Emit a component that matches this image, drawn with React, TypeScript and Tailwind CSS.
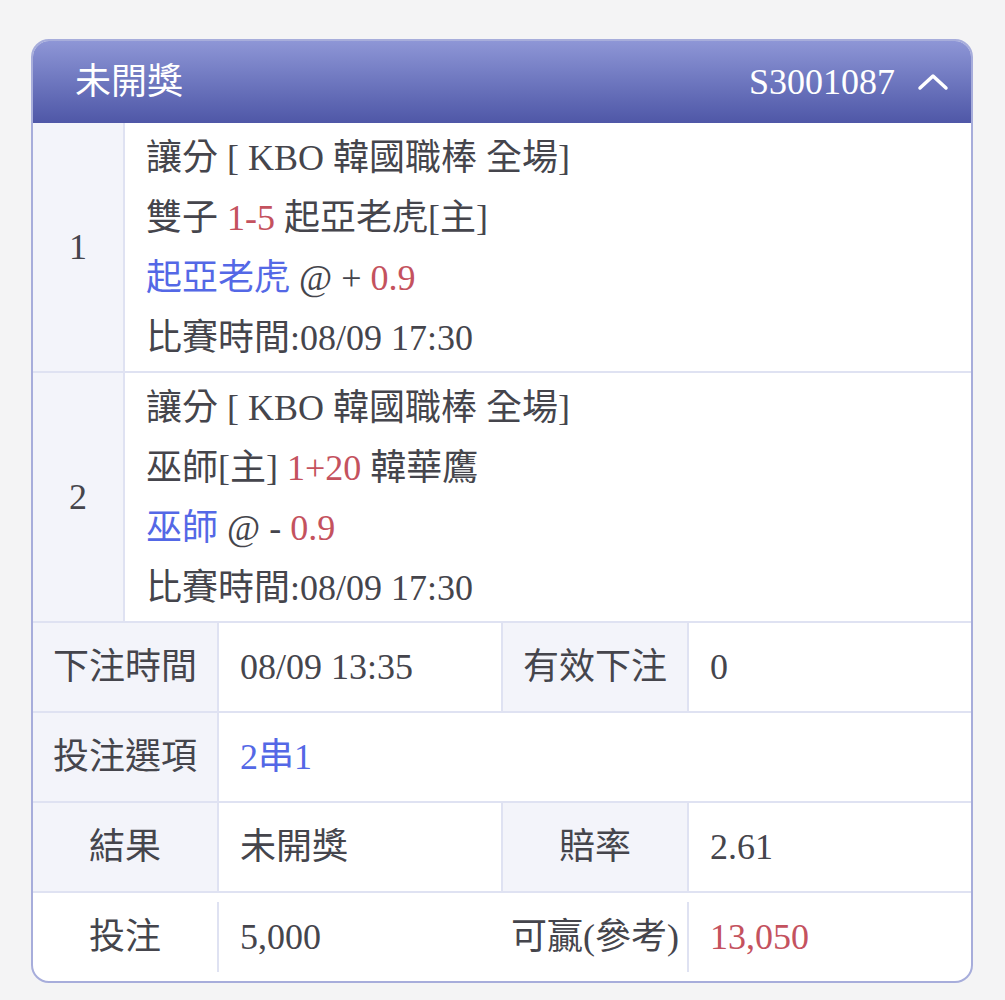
const font = "font-['Liberation_Serif','Noto_Sans_CJK_TC',serif]";

interface Leg {
  no: number;
  market: string;
  home: string;
  score: string;
  away: string;
  pick: string;
  sign: string;
  odds: string;
  time: string;
}

const legs: Leg[] = [
  {
    no: 1,
    market: "讓分 [ KBO 韓國職棒 全場]",
    home: "雙子",
    score: "1-5",
    away: "起亞老虎[主]",
    pick: "起亞老虎",
    sign: "+",
    odds: "0.9",
    time: "08/09 17:30",
  },
  {
    no: 2,
    market: "讓分 [ KBO 韓國職棒 全場]",
    home: "巫師[主]",
    score: "1+20",
    away: "韓華鷹",
    pick: "巫師",
    sign: "-",
    odds: "0.9",
    time: "08/09 17:30",
  },
];

function LegRow({ leg }: { leg: Leg }) {
  return (
    <div className="flex border-b-2 border-[#dfe2f2]">
      <div className="w-[92px] shrink-0 flex items-center justify-center bg-[#f3f4fa] border-r-2 border-[#dfe2f2]">
        {leg.no}
      </div>
      <div className="flex-1 pl-[21px] pt-[5px] pb-[3px] leading-[60px]">
        <div>{leg.market}</div>
        <div>
          {leg.home} <span className="text-[#c4525e]">{leg.score}</span>{" "}
          {leg.away}
        </div>
        <div>
          <span className="text-[#5468e6]">{leg.pick}</span> @ {leg.sign}{" "}
          <span className="text-[#c4525e]">{leg.odds}</span>
        </div>
        <div>比賽時間:{leg.time}</div>
      </div>
    </div>
  );
}

const label =
  "w-[186px] shrink-0 flex items-center justify-center bg-[#f3f4fa] border-r-2 border-[#dfe2f2]";
const value = "flex items-center pl-[21px] border-r-2 border-[#dfe2f2]";

export default function App() {
  return (
    <div className={`min-h-screen bg-[#f4f4f5] pt-[39px] pl-[31px] ${font} text-[36px] text-[#45454c]`}>
      <div className="w-[942px] rounded-[18px] border-2 border-[#a7addb] bg-white overflow-hidden">
        <header className="h-[82px] flex items-center justify-between pl-[42px] pr-[22px] bg-gradient-to-b from-[#8e96d6] to-[#4f57a7] text-white">
          <span>未開獎</span>
          <div className="flex items-center gap-[22px]">
            <span>S3001087</span>
            <svg width="32" height="20" viewBox="0 0 32 20" fill="none">
              <path
                d="M3 16 L16 4 L29 16"
                stroke="white"
                strokeWidth="3.5"
                strokeLinecap="round"
                strokeLinejoin="round"
              />
            </svg>
          </div>
        </header>

        {legs.map((leg) => (
          <LegRow key={leg.no} leg={leg} />
        ))}

        <div className="flex h-[90px] border-b-2 border-[#dfe2f2]">
          <div className={label}>下注時間</div>
          <div className={`${value} w-[284px]`}>08/09 13:35</div>
          <div className={label}>有效下注</div>
          <div className="flex-1 flex items-center pl-[21px]">0</div>
        </div>

        <div className="flex h-[90px] border-b-2 border-[#dfe2f2]">
          <div className={label}>投注選項</div>
          <div className="flex-1 flex items-center pl-[21px] text-[#5468e6]">2串1</div>
        </div>

        <div className="flex h-[90px] border-b-2 border-[#dfe2f2]">
          <div className={label}>結果</div>
          <div className={`${value} w-[284px]`}>未開獎</div>
          <div className={label}>賠率</div>
          <div className="flex-1 flex items-center pl-[21px]">2.61</div>
        </div>

        <div className="flex h-[88px] items-center">
          <div className="w-[184px] shrink-0 text-center">投注</div>
          <div className="w-[2px] h-[70px] bg-[#dfe2f2]" />
          <div className="w-[284px] pl-[21px]">5,000</div>
          <div className="w-[184px] shrink-0 text-center">可贏(參考)</div>
          <div className="w-[2px] h-[70px] bg-[#dfe2f2]" />
          <div className="flex-1 pl-[21px] text-[#c4525e]">13,050</div>
        </div>
      </div>
    </div>
  );
}
